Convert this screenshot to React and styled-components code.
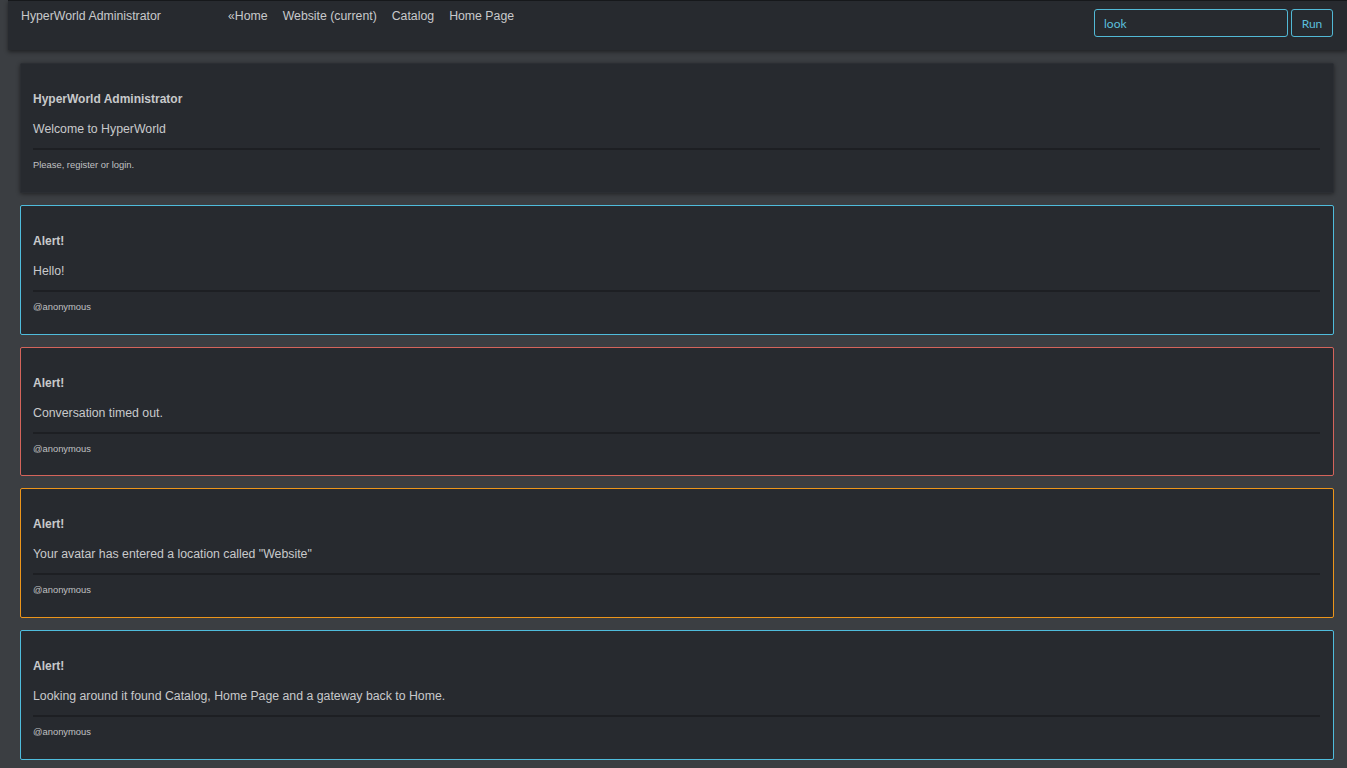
import React, { useState } from "react";
import styled, { createGlobalStyle } from "styled-components";

const GlobalStyle = createGlobalStyle`
  html, body {
    margin: 0;
    padding: 0;
    background: #3b3e42;
    font-family: "Liberation Sans", Arial, sans-serif;
    color: #c8c9cb;
    overflow: hidden;
  }
`;

const Page = styled.div`
  min-height: 768px;
  background: #3b3e42;
`;

const Navbar = styled.nav`
  display: flex;
  align-items: flex-start;
  height: 50px;
  box-sizing: border-box;
  margin-left: 8px;
  padding: 8px 14px 0 13px;
  background: #272a2f;
  border-top: 1px solid #16181b;
  box-shadow: 0 2px 4px rgba(0, 0, 0, 0.45);
`;

const Brand = styled.div`
  width: 207px;
  font-size: 12.3px;
  line-height: 14px;
  color: #c8c9cb;
`;

const Links = styled.ul`
  display: flex;
  gap: 15px;
  margin: 0;
  padding: 0;
  list-style: none;
  flex: 1;
`;

const Link = styled.li`
  font-size: 12.3px;
  line-height: 14px;
  color: #c8c9cb;
  cursor: pointer;
`;

const Search = styled.form`
  display: flex;
  gap: 3px;
`;

const Input = styled.input`
  width: 194px;
  height: 28px;
  box-sizing: border-box;
  padding: 0 9px;
  background: #272a2f;
  border: 1px solid #52b9d6;
  border-radius: 3px;
  color: #5bbfdc;
  font-family: Lato, "Open Sans", sans-serif;
  font-size: 12px;
  outline: none;
`;

const Button = styled.button`
  width: 42px;
  height: 28px;
  background: #272a2f;
  border: 1px solid #52b9d6;
  border-radius: 3px;
  color: #5bbfdc;
  font-family: Lato, "Open Sans", sans-serif;
  font-size: 12px;
  padding: 0;
`;

const Feed = styled.main`
  display: flex;
  flex-direction: column;
  gap: 12.07px;
  padding: 13.3px 13px 0 20px;
`;

const Card = styled.article`
  background: #272a2f;
  border: 1px solid ${(p) => p.$border || "#2b2e33"};
  border-radius: 2px;
  padding: 28px 13px 20.6px 12px;
  box-shadow: ${(p) => (p.$border ? "none" : "0 1px 4px rgba(0, 0, 0, 0.45)")};
`;

const Title = styled.h4`
  margin: 0 0 16px;
  font-size: 12px;
  line-height: 14px;
  font-weight: bold;
  color: #c8c9cb;
`;

const Text = styled.p`
  margin: 0 0 12px;
  font-size: 12.3px;
  line-height: 14px;
  color: #c8c9cb;
`;

const Rule = styled.hr`
  margin: 0 0 9px;
  border: 0;
  height: 2px;
  background: #1d1f23;
`;

const Meta = styled.small`
  display: block;
  font-size: 9.4px;
  line-height: 12px;
  color: #c0c1c3;
`;

const messages = [
  { border: "#4fbcdc", text: "Hello!" },
  { border: "#d4645b", text: "Conversation timed out." },
  { border: "#ec951b", text: 'Your avatar has entered a location called "Website"' },
  {
    border: "#4fbcdc",
    text: "Looking around it found Catalog, Home Page and a gateway back to Home.",
  },
];

export default function App() {
  const [command, setCommand] = useState("look");

  return (
    <Page>
      <GlobalStyle />
      <Navbar>
        <Brand>HyperWorld Administrator</Brand>
        <Links>
          <Link>«Home</Link>
          <Link>Website (current)</Link>
          <Link>Catalog</Link>
          <Link>Home Page</Link>
        </Links>
        <Search onSubmit={(e) => e.preventDefault()}>
          <Input value={command} onChange={(e) => setCommand(e.target.value)} />
          <Button type="submit">Run</Button>
        </Search>
      </Navbar>
      <Feed>
        <Card>
          <Title>HyperWorld Administrator</Title>
          <Text>Welcome to HyperWorld</Text>
          <Rule />
          <Meta>Please, register or login.</Meta>
        </Card>
        {messages.map((m, i) => (
          <Card key={i} $border={m.border}>
            <Title>Alert!</Title>
            <Text>{m.text}</Text>
            <Rule />
            <Meta>@anonymous</Meta>
          </Card>
        ))}
      </Feed>
    </Page>
  );
}
